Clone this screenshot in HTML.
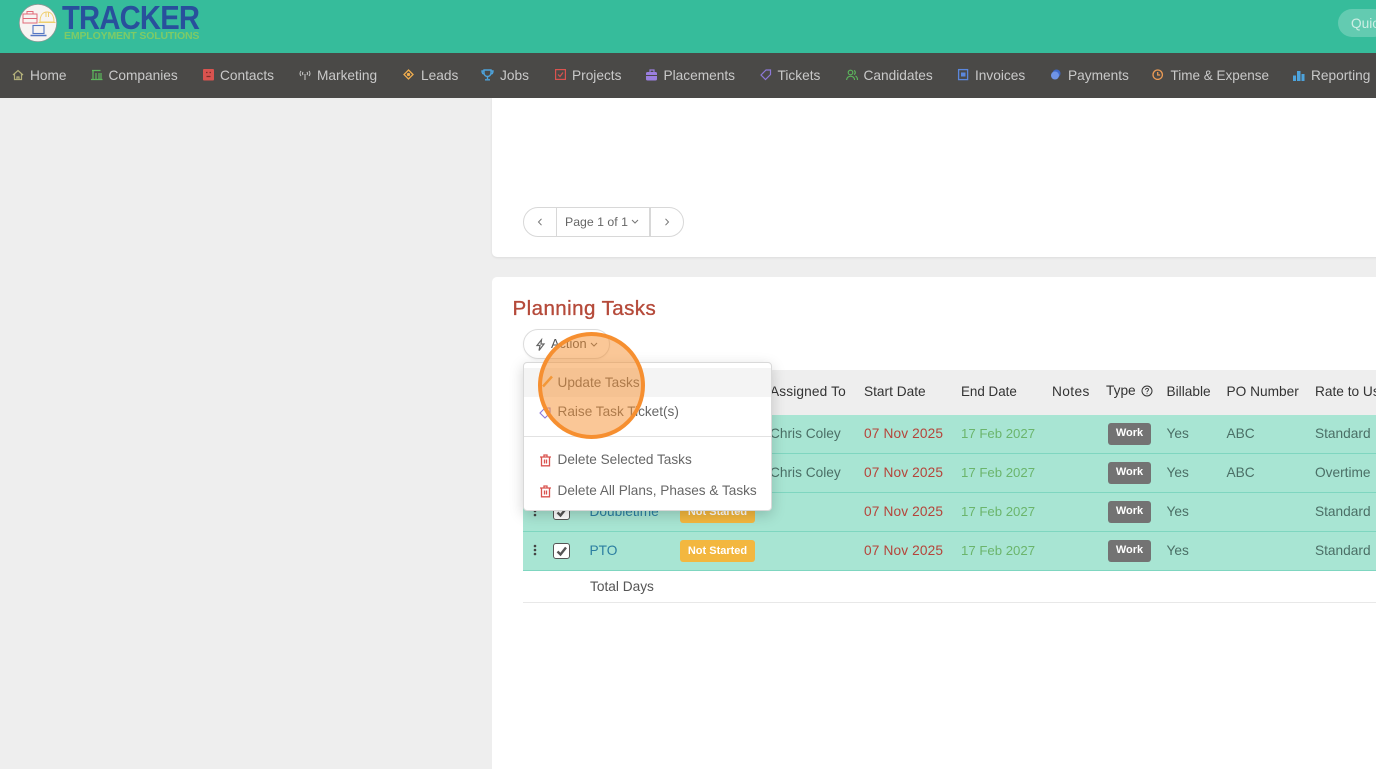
<!DOCTYPE html>
<html style="overflow:hidden;height:769px"><head><meta charset="utf-8">
<style>
html,body{margin:0;padding:0}
body{width:1376px;height:769px;overflow:hidden;position:relative;background:#eeeeee;font-family:"Liberation Sans",sans-serif;color:#555}
.a,.t{position:absolute}
.t{white-space:nowrap;font-size:13.7px;line-height:16px}
.n{color:#c9c9c9;top:68px}
.h{color:#333;top:384px}
.g{color:#4b6f66}
.r{color:#b5443a;letter-spacing:.14px}
.e{color:#6bb56c;font-size:13.2px}
.m{color:#666;font-size:13.6px}
.l{left:523px;width:853px;height:1px;background:#7fd6c0}
.w{left:1108px;width:43px;height:22px;background:#737373;border-radius:3px;color:#fff;font-size:11px;font-weight:bold;line-height:21px;text-align:center}
.ns{left:680px;width:75px;height:22px;background:#f3b73f;border-radius:3px;color:#fff;font-size:11px;font-weight:bold;line-height:22px;text-align:center}
.c{left:553px;width:15px;height:14px;border:1.5px solid #555;border-radius:3px;background:#fff}
svg{position:absolute;overflow:visible}
</style></head>
<body>
<!-- header -->
<div class="a" style="left:0;top:0;width:1376px;height:53px;background:#36bc9b"></div>
<svg style="left:19px;top:4px" width="40" height="40" viewBox="0 0 40 40" fill="none">
<circle cx="19" cy="19" r="18.7" fill="#f7f4f2" stroke="#8a9a96" stroke-width=".8"/>
<rect x="4" y="10" width="14" height="9" stroke="#e06a78" stroke-width="1"/><path d="M4 14.500h14M8 10V7.500h6V10" stroke="#e06a78" stroke-width="1"/>
<path d="M21 18c0-7 3-10 7-10s7 3 7 10zM19.500 18.500h17M27 8v5M29.500 8v5" stroke="#efcf6e" stroke-width="1"/>
<rect x="14" y="21.500" width="11" height="8" stroke="#5577c4" stroke-width="1.100"/><path d="M11.500 31.500h16" stroke="#5577c4" stroke-width="1.500"/>
</svg>
<div class="t" style="left:62px;top:1px;font-size:33px;line-height:33px;font-weight:bold;color:#28509c;letter-spacing:-.9px;transform:scaleX(.885);transform-origin:0 0">TRACKER</div>
<div class="t" style="left:64px;top:30px;font-size:10.500px;line-height:12px;font-weight:bold;color:#7ecb66;letter-spacing:-.15px">EMPLOYMENT SOLUTIONS</div>
<div class="a" style="left:1338px;top:9px;width:50px;height:28px;border-radius:14px;background:#63cbb1"></div>
<div class="t" style="left:1351px;top:16px;color:#cdeee4">Quick</div>

<!-- nav -->
<div class="a" style="left:0;top:53px;width:1376px;height:45px;background:#4a4947"></div>
<svg style="left:12px;top:69px" width="12" height="12" fill="none" stroke="#b3b07a" stroke-width="1.200"><path d="M1 6l5-4.500 5 4.500M2.500 5v5.500h7V5M5 10.500V8h2v2.500"/></svg>
<div class="t n" style="left:30px">Home</div>
<svg style="left:91px;top:69px" width="12" height="12" fill="none" stroke="#5cb85c" stroke-width="1.200"><path d="M1 1.500h8.500M2 1.500V10M5 4v6M8 4v6M10 4v6M0 10.500h11.500"/></svg>
<div class="t n" style="left:108.500px">Companies</div>
<svg style="left:203px;top:69px" width="12" height="12"><rect width="11" height="11.500" rx="1" fill="#d9534f"/><path d="M3 3.500h1.500M6.500 3.500H8M3.500 7.500h4" stroke="#7c2d2a" stroke-width="1.200"/></svg>
<div class="t n" style="left:220px">Contacts</div>
<svg style="left:299px;top:70px" width="12" height="11" fill="none" stroke="#c9c9c9" stroke-width="1"><path d="M2 1Q0 3.500 2 6M4 2Q3 3.500 4 5M10 1q2 2.500 0 5M8 2q1 1.500 0 3M6 4v6"/></svg>
<div class="t n" style="left:317px">Marketing</div>
<svg style="left:403px;top:69px" width="12" height="12" fill="none" stroke="#f0ad4e" stroke-width="1.300"><path d="M5.500 1l4.500 4.500-4.500 4.500L1 5.500z"/><circle cx="5.500" cy="5.500" r="1" fill="#f0ad4e"/></svg>
<div class="t n" style="left:421px">Leads</div>
<svg style="left:481px;top:69px" width="13" height="12" fill="none" stroke="#4da3dc" stroke-width="1.400"><path d="M3 1h7v3a3.500 3.500 0 0 1-7 0zM3 2H1q0 3 2.500 3M10 2h2q0 3-2.500 3M6.500 8v2M4 10.800h5"/></svg>
<div class="t n" style="left:500px">Jobs</div>
<svg style="left:555px;top:69px" width="12" height="12" fill="none" stroke="#d9534f" stroke-width="1.200"><rect x=".6" y=".6" width="9.800" height="9.800"/><path d="M3 5.500l2 2 3-4"/></svg>
<div class="t n" style="left:572px">Projects</div>
<svg style="left:646px;top:69px" width="12" height="12"><path d="M4 3V1h4v2" fill="none" stroke="#9b7fe0" stroke-width="1.200"/><rect y="3" width="11" height="8.500" rx="1.500" fill="#9b7fe0"/><path d="M0 6.500h11" stroke="#4a4947"/></svg>
<div class="t n" style="left:663.500px">Placements</div>
<svg style="left:760px;top:69px" width="12" height="12" fill="none" stroke="#8d78d8" stroke-width="1.200"><path d="M1 6l5-5h4.500v4.500l-5 5z"/></svg>
<div class="t n" style="left:777.500px">Tickets</div>
<svg style="left:846px;top:69px" width="12" height="12" fill="none" stroke="#5cb85c" stroke-width="1.100"><circle cx="4.500" cy="3.500" r="2.300"/><path d="M.6 11c0-5 8-5 8 0M8 1.500a2.200 2.200 0 0 1 0 4M9.500 7q2 1 2 4"/></svg>
<div class="t n" style="left:863.500px">Candidates</div>
<svg style="left:958px;top:69px" width="11" height="12"><rect x=".6" y=".6" width="9" height="10" fill="none" stroke="#5b87dc" stroke-width="1.300"/><rect x="3" y="3.500" width="4.500" height="4" fill="#5b87dc"/></svg>
<div class="t n" style="left:975px">Invoices</div>
<svg style="left:1050px;top:69px" width="12" height="12"><circle cx="6.500" cy="4.500" r="4" fill="#3e68c8"/><circle cx="5" cy="6.500" r="4" fill="#6f94e6"/></svg>
<div class="t n" style="left:1068px">Payments</div>
<svg style="left:1152px;top:69px" width="12" height="12" fill="none" stroke="#ea9a55" stroke-width="1.300"><circle cx="5.700" cy="5.700" r="4.700"/><path d="M5.700 3v3h2.500"/></svg>
<div class="t n" style="left:1170.500px;font-size:13.500px">Time &amp; Expense</div>
<svg style="left:1293px;top:71px" width="12" height="10" fill="#4da3dc"><rect y="4.500" width="3" height="5.500"/><rect x="4" width="3.500" height="10"/><rect x="8.500" y="3" width="3" height="7"/></svg>
<div class="t n" style="left:1311px">Reporting</div>

<!-- cards -->
<div class="a" style="left:492px;top:98px;width:900px;height:159px;background:#fff;border-radius:0 0 5px 5px;box-shadow:0 1px 2px rgba(0,0,0,.08)"></div>
<div class="a" style="left:492px;top:277px;width:900px;height:492px;background:#fff;border-radius:5px 0 0 0"></div>

<!-- pager -->
<div class="a" style="left:523px;top:207px;width:159px;height:28px;border:1px solid #d8d8d8;border-radius:15px"></div>
<div class="a" style="left:556px;top:207px;width:1px;height:30px;background:#d8d8d8"></div>
<div class="a" style="left:649px;top:207px;width:2px;height:30px;background:#d8d8d8"></div>
<svg style="left:537px;top:218px" width="6" height="8" fill="none" stroke="#777" stroke-width="1"><path d="M4.500 .8L1.500 4l3 3.200"/></svg>
<div class="t" style="left:565px;top:214px;font-size:12.300px;color:#666">Page 1 of 1</div>
<svg style="left:631px;top:219px" width="8" height="6" fill="none" stroke="#777" stroke-width="1"><path d="M1 1l3 3 3-3"/></svg>
<svg style="left:664px;top:218px" width="6" height="8" fill="none" stroke="#777" stroke-width="1"><path d="M1.500 .8L4.500 4l-3 3.200"/></svg>

<div class="t" style="left:512.500px;top:297px;font-size:20.500px;line-height:24px;color:#b54a3a;letter-spacing:.44px;-webkit-text-stroke:.35px #b54a3a">Planning Tasks</div>

<!-- action button -->
<div class="a" style="left:523px;top:329px;width:85px;height:28px;border:1px solid #dcdcdc;border-radius:16px;box-shadow:0 1px 2px rgba(0,0,0,.05)"></div>
<svg style="left:536px;top:339px" width="9" height="12" fill="none" stroke="#666" stroke-width="1.200"><path d="M5.500 .8L1 6.500h3L3 11.500l5-6.500H5z"/></svg>
<div class="t" style="left:551px;top:336px;font-size:12.800px">Action</div>
<svg style="left:590px;top:342px" width="8" height="6" fill="none" stroke="#666" stroke-width="1.100"><path d="M1 1l3 3 3-3"/></svg>

<!-- table -->
<div class="a" style="left:523px;top:370px;width:853px;height:45px;background:#eeeeee"></div>
<div class="a" style="left:523px;top:415px;width:853px;height:156px;background:#a8e5d3"></div>
<div class="a l" style="top:453px"></div>
<div class="a l" style="top:492px"></div>
<div class="a l" style="top:531px"></div>
<div class="a l" style="top:570px"></div>
<div class="a" style="left:523px;top:602px;width:853px;height:1px;background:#e8e8e8"></div>

<div class="t h" style="left:770px;letter-spacing:.14px">Assigned To</div>
<div class="t h" style="left:864px">Start Date</div>
<div class="t h" style="left:961px;font-size:13.400px">End Date</div>
<div class="t h" style="left:1052px;letter-spacing:.4px">Notes</div>
<div class="t h" style="left:1106px;top:383px">Type</div>
<svg style="left:1141px;top:385px" width="12" height="12" fill="none" stroke="#333"><circle cx="6" cy="6" r="5"/><path d="M4.500 4.800Q4.800 3.300 6 3.300q1.600 0 1.500 1.400C7.400 5.800 6 5.700 6 7.200" stroke-width=".9"/><circle cx="6" cy="8.800" r=".5" fill="#333" stroke="none"/></svg>
<div class="t h" style="left:1166.500px">Billable</div>
<div class="t h" style="left:1226.500px">PO Number</div>
<div class="t h" style="left:1315px">Rate to Use</div>

<!-- row 1 -->
<div class="t g" style="left:770px;top:426px">Chris Coley</div>
<div class="t r" style="left:864px;top:426px">07 Nov 2025</div>
<div class="t e" style="left:961px;top:426px">17 Feb 2027</div>
<div class="a w" style="top:423px">Work</div>
<div class="t g" style="left:1166.500px;top:426px">Yes</div>
<div class="t g" style="left:1226.500px;top:426px">ABC</div>
<div class="t g" style="left:1315px;top:426px">Standard</div>
<!-- row 2 -->
<div class="t g" style="left:770px;top:465px">Chris Coley</div>
<div class="t r" style="left:864px;top:465px">07 Nov 2025</div>
<div class="t e" style="left:961px;top:465px">17 Feb 2027</div>
<div class="a w" style="top:462px">Work</div>
<div class="t g" style="left:1166.500px;top:465px">Yes</div>
<div class="t g" style="left:1226.500px;top:465px">ABC</div>
<div class="t g" style="left:1315px;top:465px">Overtime</div>
<!-- row 3 -->
<svg style="left:533px;top:505px" width="4" height="14" fill="#444"><circle cx="2" cy="2" r="1.300"/><circle cx="2" cy="6" r="1.300"/><circle cx="2" cy="10" r="1.300"/></svg>
<div class="a c" style="top:504px"></div>
<svg style="left:556px;top:507px" width="12" height="11" fill="none" stroke="#555" stroke-width="2.400"><path d="M1.500 5.500l3 3 5.500-7"/></svg>
<div class="t" style="left:589.500px;top:504px;color:#2b7ea1">Doubletime</div>
<div class="a ns" style="top:501px">Not Started</div>
<div class="t r" style="left:864px;top:504px">07 Nov 2025</div>
<div class="t e" style="left:961px;top:504px">17 Feb 2027</div>
<div class="a w" style="top:501px">Work</div>
<div class="t g" style="left:1166.500px;top:504px">Yes</div>
<div class="t g" style="left:1315px;top:504px">Standard</div>
<!-- row 4 -->
<svg style="left:533px;top:544px" width="4" height="14" fill="#444"><circle cx="2" cy="2" r="1.300"/><circle cx="2" cy="6" r="1.300"/><circle cx="2" cy="10" r="1.300"/></svg>
<div class="a c" style="top:543px"></div>
<svg style="left:556px;top:546px" width="12" height="11" fill="none" stroke="#555" stroke-width="2.400"><path d="M1.500 5.500l3 3 5.500-7"/></svg>
<div class="t" style="left:589.500px;top:543px;color:#2b7ea1">PTO</div>
<div class="a ns" style="top:540px">Not Started</div>
<div class="t r" style="left:864px;top:543px">07 Nov 2025</div>
<div class="t e" style="left:961px;top:543px">17 Feb 2027</div>
<div class="a w" style="top:540px">Work</div>
<div class="t g" style="left:1166.500px;top:543px">Yes</div>
<div class="t g" style="left:1315px;top:543px">Standard</div>
<div class="t" style="left:590px;top:579px;color:#555">Total Days</div>

<!-- dropdown -->
<div class="a" style="left:523px;top:362px;width:247px;height:147px;background:#fff;border:1px solid #d9d9d9;border-radius:4px;box-shadow:0 4px 14px rgba(0,0,0,.18)"></div>
<div class="a" style="left:524px;top:368px;width:247px;height:29px;background:#f4f4f4"></div>
<div class="a" style="left:524px;top:436px;width:247px;height:1px;background:#e2e2e2"></div>
<svg style="left:541px;top:375px" width="12" height="14" fill="none" stroke="#f0a040" stroke-width="2.500"><path d="M2 11.500L11 1.500"/></svg>
<div class="t m" style="left:557.500px;top:375px">Update Tasks</div>
<svg style="left:539px;top:406px" width="13" height="13" fill="none" stroke="#8d78d8" stroke-width="1.100"><path d="M1 7l5-5h5v5l-5 5z"/></svg>
<div class="t m" style="left:557.500px;top:404px">Raise Task Ticket(s)</div>
<svg style="left:540px;top:454px" width="12" height="13" fill="none" stroke="#d9534f" stroke-width="1.300"><path d="M0 3h11M4 3V1h3v2M1.500 3v8.800h8V3M4.500 5.500v4M6.500 5.500v4"/></svg>
<div class="t m" style="left:557.500px;top:452px">Delete Selected Tasks</div>
<svg style="left:540px;top:485px" width="12" height="13" fill="none" stroke="#d9534f" stroke-width="1.300"><path d="M0 3h11M4 3V1h3v2M1.500 3v8.800h8V3M4.500 5.500v4M6.500 5.500v4"/></svg>
<div class="t m" style="left:557.500px;top:483px">Delete All Plans, Phases &amp; Tasks</div>

<!-- highlight circle -->
<div class="a" style="left:538px;top:332px;width:99px;height:99px;border:4px solid #f68f30;border-radius:50%;background:rgba(246,143,48,.5)"></div>
</body></html>
